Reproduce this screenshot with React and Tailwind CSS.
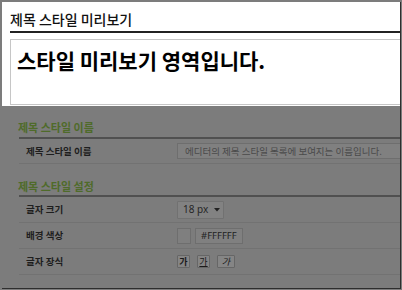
import React from 'react';

const font = { fontFamily: '"Noto Sans CJK KR", "Noto Sans", sans-serif' };

function Row({ label, children }) {
  return (
    <div className="flex items-center h-[26px] border-b border-[#727272]">
      <div className="w-[158px] shrink-0 pl-[7px] text-[9.5px] font-bold text-[#1e1e1e]">{label}</div>
      <div className="flex items-center gap-[4px]">{children}</div>
    </div>
  );
}

export default function App() {
  return (
    <div className="w-[402px] h-[290px] bg-[#7c7c7c] pt-[2px] pl-[2px] pr-[1px] pb-[1px] overflow-hidden" style={font}>
      <div className="w-full h-full flex flex-col border-r border-b border-[#2e2e2e] overflow-hidden">
        {/* PREVIEW */}
        <div className="bg-white h-[104px] shrink-0 pl-[8px]">
          <div className="pt-[7px] pb-[2px] h-[31px] border-b-2 border-[#222] text-[14px] leading-[20px] font-medium text-[#111]">
            제목 스타일 미리보기
          </div>
          <div className="mt-[6px] h-[66px] w-[420px] border border-[#c6c6c6] pl-[6px] pt-[6px]">
            <div className="text-[21px] leading-[28px] font-bold text-black">스타일 미리보기 영역입니다.</div>
          </div>
        </div>

        {/* SETTINGS (dimmed) */}
        <div className="flex-1 pl-[16px]">
          <div className="pt-[13px] h-[31px] text-[11px] leading-[16px] font-semibold text-[#4f6b2a]">제목 스타일 이름</div>
          <div className="ml-[1px] border-t-2 border-[#505050]">
            <div className="flex items-center h-[25px] border-b border-[#727272]">
              <div className="w-[158px] shrink-0 pl-[7px] text-[9.5px] font-bold text-[#1e1e1e]">제목 스타일 이름</div>
              <div className="h-[16px] w-[260px] shrink-0 border border-[#6e6e6e] bg-[#808080] pl-[7px] text-[9.5px] leading-[14px] text-[#4a4a4a] whitespace-nowrap">
                에디터의 제목 스타일 목록에 보여지는 이름입니다.
              </div>
            </div>
          </div>
          <div className="pt-[14px] h-[31px] text-[11px] leading-[16px] font-semibold text-[#4f6b2a]">제목 스타일 설정</div>
          <div className="ml-[1px] border-t-2 border-[#505050]">
            <Row label="글자 크기">
              <div className="h-[18px] w-[47px] border border-[#717171] bg-[#828282] rounded-[1px] flex items-center pl-[5px] gap-[6px] text-[10px] text-[#262626]" style={{ fontFamily: '"Noto Sans", sans-serif' }}>
                <span>18 px</span>
                <svg width="6" height="4" viewBox="0 0 6 4"><path d="M0 0h6L3 3.5z" fill="#222" /></svg>
              </div>
            </Row>
            <Row label="배경 색상">
              <div className="h-[16px] w-[14px] border border-[#6e6e6e] bg-[#7f7f7f]" />
              <div className="h-[16px] w-[48px] border border-[#6e6e6e] bg-[#808080] pl-[5px] text-[9.5px] leading-[14px] text-[#222]" style={{ fontFamily: '"Noto Sans", sans-serif' }}>#FFFFFF</div>
            </Row>
            <Row label="글자 장식">
              <div className="flex items-center gap-[7px]">
                <div className="h-[13px] w-[13px] border border-[#666] bg-[#858585] rounded-[1px] flex items-center justify-center text-[9px] font-bold text-[#1a1a1a]">가</div>
                <div className="h-[13px] w-[13px] border border-[#666] bg-[#858585] rounded-[1px] flex items-center justify-center text-[9px] underline text-[#1a1a1a]">가</div>
                <div className="h-[13px] w-[18px] border border-[#666] bg-[#858585] rounded-[1px] flex items-center justify-center text-[9px] italic text-[#1a1a1a]">가</div>
              </div>
            </Row>
          </div>
        </div>
      </div>
    </div>
  );
}
